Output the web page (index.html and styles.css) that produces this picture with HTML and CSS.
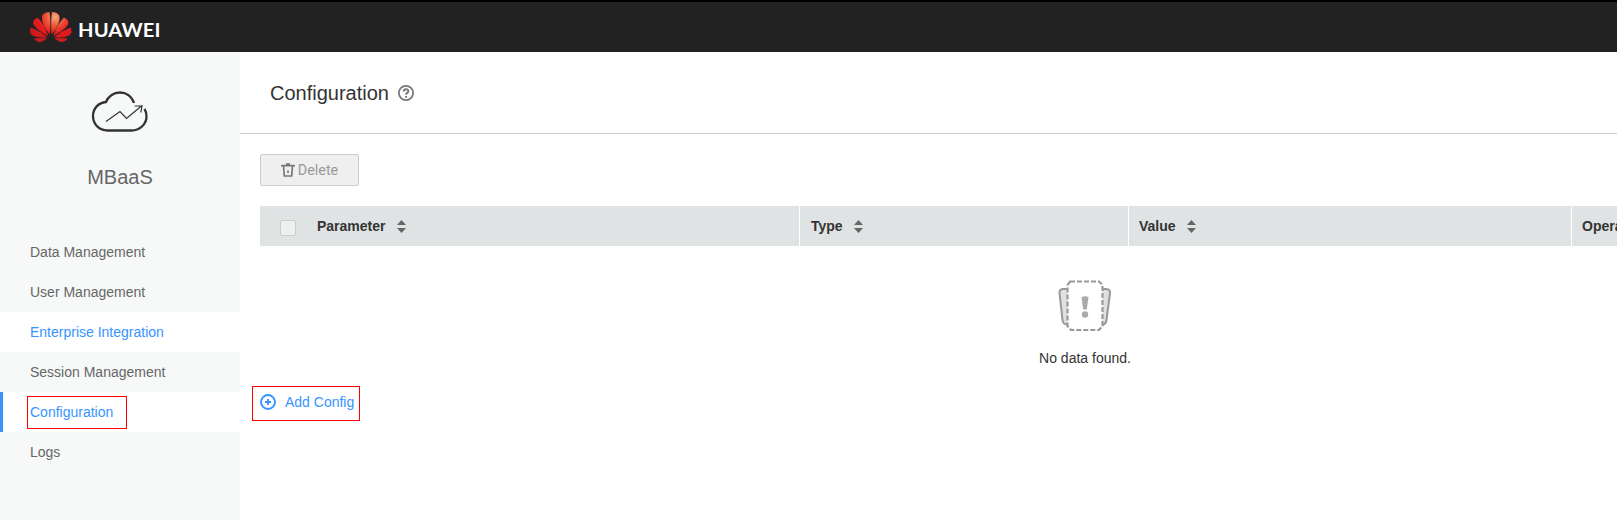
FILE: index.html
```html
<!DOCTYPE html>
<html lang="en">
<head>
<meta charset="utf-8">
<title>Configuration</title>
<link rel="stylesheet" href="styles.css">
</head>
<body>
<header class="topbar">
  <svg class="logo" width="42" height="31" viewBox="0 0 42 31">
    <defs>
      <radialGradient id="petal" gradientUnits="userSpaceOnUse" cx="25" cy="5" r="28">
        <stop offset="0" stop-color="#f6a878"/><stop offset=".36" stop-color="#ec4a34"/><stop offset=".6" stop-color="#e61a1c"/><stop offset="1" stop-color="#c81a1c"/>
      </radialGradient>
    </defs>
    <g fill="url(#petal)">
      <path d="M20 22.500C14 16 10.500 8 12.500 3Q15 0 19.500 0Q21 8 20 22.500Z"/>
      <path d="M21.500 22.500C27.500 16 31 8 29 3Q26.500 0 22 0Q20.500 8 21.500 22.500Z"/>
      <path d="M18.500 24C12 21 3 15 3 10.500Q4 7 7.500 5.500Q14 12 18.500 24Z"/>
      <path d="M23 24C29.500 21 38.500 15 38.500 10.500Q37.500 7 34 5.500Q27.500 12 23 24Z"/>
      <path d="M17.500 25.200C9 26 1 25 0 20Q0 17 1 15.500Q10 19 17.500 25.200Z"/>
      <path d="M24 25.200C32.500 26 40.500 25 41.500 20Q41.500 17 40.500 15.500Q31.500 19 24 25.200Z"/>
      <path d="M17 26.300H4Q6 30 9.500 30Q13 30 17 26.300Z"/>
      <path d="M24.500 26.300H37.500Q35.500 30 32 30Q28.500 30 24.500 26.300Z"/>
    </g>
  </svg>
  <span class="brand">HUAWEI</span>
</header>
<div class="layout">
  <aside class="sidebar">
    <div class="service">
      <svg width="58" height="44" viewBox="0 0 58 44" fill="none" stroke="#333">
        <path stroke-width="2.300" d="M43 13C40.500 5.500 34.500 2.500 29 2.500C22.500 2.500 17 6.500 15 12C7.500 12.500 2 18.500 2 26C2 34.500 8.500 40.500 16.500 40.500H40.500C48.500 40.500 55.500 34.500 55.500 26.500Q55.500 22 53.500 19"/>
        <path stroke-width="1.200" d="M15 31.500L29 21.500L35.500 28.500L51 15.500M43.500 16H51L49.800 22.500"/>
      </svg>
      <div class="service-name">MBaaS</div>
    </div>
    <nav class="menu">
      <a class="item">Data Management</a>
      <a class="item">User Management</a>
      <a class="item open">Enterprise Integration</a>
      <a class="item">Session Management</a>
      <a class="item open current"><span class="mark">Configuration</span></a>
      <a class="item">Logs</a>
    </nav>
  </aside>
  <main class="main">
    <div class="page-head">
      <h1 class="title">Configuration</h1>
      <svg width="16" height="16" viewBox="0 0 16 16" fill="none" stroke="#777">
        <circle cx="8" cy="8" r="7.100" stroke-width="1.800"/>
        <path stroke-width="2" d="M5.700 6.500C5.700 3.400 10.400 3.500 10.400 6.200C10.400 7.800 8.100 7.800 8.100 9.800M8.100 10.900V12.700"/>
      </svg>
    </div>
    <div class="content">
      <button class="delete" disabled>
        <svg width="14" height="14" viewBox="0 0 14 14" fill="none" stroke="#777">
          <path stroke-width="1.700" d="M0 2.600H14M2.500 3L3.300 13H10.700L11.500 3M5 1H9M7 7.500V10"/>
        </svg>Delete</button>
      <div class="table-head">
        <div class="cell first"><span class="check"></span>Parameter<svg class="sort" width="9" height="13" viewBox="0 0 9 13"><path d="M0 5L4.500 0L9 5ZM0 8H9L4.500 13Z"/></svg></div>
        <div class="cell">Type<svg class="sort" width="9" height="13" viewBox="0 0 9 13"><path d="M0 5L4.500 0L9 5ZM0 8H9L4.500 13Z"/></svg></div>
        <div class="cell near">Value<svg class="sort" width="9" height="13" viewBox="0 0 9 13"><path d="M0 5L4.500 0L9 5ZM0 8H9L4.500 13Z"/></svg></div>
        <div class="cell near">Operation</div>
      </div>
      <div class="empty">
        <svg width="54" height="52" viewBox="0 0 54 52" fill="none" stroke="#999">
          <path fill="#e0e0e0" stroke-width="2" d="M10 9H5Q1 9.500 1.500 13L4.500 40Q5 44.500 9 44.500H11M43 9H48Q52.500 9.500 52 13L48.500 40Q48 44.500 44 44.500H42"/>
          <path fill="#fff" stroke-width="2.200" stroke-dasharray="5 2" d="M12 1.500H41L44.500 5V46L41 50H13L9.500 46V5Z"/>
          <path fill="#aaa" stroke="none" d="M23.500 17Q27 15.500 30.500 17L28.800 29.500H25.200Z"/>
          <circle cx="27" cy="34.500" r="3.200" fill="#aaa" stroke="none"/>
        </svg>
        <div>No data found.</div>
      </div>
      <a class="add">
        <svg class="plus" width="16" height="16" viewBox="0 0 16 16" fill="none" stroke="#3794ff" stroke-width="1.900"><circle cx="8" cy="8" r="7"/><path d="M8 5V11M5 8H11"/></svg>
        Add Config
      </a>
    </div>
  </main>
</div>
</body>
</html>
```

FILE: styles.css
```css
* { box-sizing: border-box; }
body { margin: 0; height: 520px; overflow: hidden; background: #fff; color: #333; font: 14px/20px "Liberation Sans", Arial, sans-serif; }
svg { display: block; flex: none; }
.topbar { height: 52px; border-top: 2px solid #000; background: #222; display: flex; align-items: flex-start; padding: 10px 30px; gap: 6px; }
.brand { color: #fff; font: bold 18.500px/20px Lato, sans-serif; letter-spacing: .1px; padding-top: 8px; transform: scaleX(1.09); transform-origin: left; }
.layout { display: flex; height: 468px; }
.sidebar { flex: none; width: 240px; background: #f7f9f9; }
.service { height: 180px; padding-top: 38px; display: flex; flex-direction: column; align-items: center; color: #666; }
.service-name { font-size: 20px; line-height: 24px; margin-top: 31px; }
.menu { display: flex; flex-direction: column; }
.item { height: 40px; line-height: 40px; padding-left: 30px; color: #666; }
.open { background: #fff; color: #3794ff; }
.current { display: flex; align-items: center; padding-left: 24px; border-left: 3px solid #3794ff; }
.mark { width: 100px; height: 33px; border: 1px solid #f00; line-height: 31px; padding-left: 2px; }
.main { flex: 1; min-width: 0; overflow: hidden; }
.page-head { height: 82px; border-bottom: 1px solid #ccc; display: flex; align-items: center; gap: 9px; padding-left: 30px; }
.title { margin: 0; font-size: 20px; font-weight: normal; line-height: 24px; }
.content { padding: 20px 0 0 20px; }
.delete { display: flex; align-items: center; justify-content: center; gap: 3px; width: 99px; height: 32px; border: 1px solid #ccc; border-radius: 2px; background: #efefef; color: #999; font: 14.300px Roboto, sans-serif; padding: 0; }
.table-head { display: grid; grid-template-columns: 539px 328px 442px 120px; gap: 1px; height: 40px; margin-top: 20px; font-weight: bold; }
.cell { background: #dfe3e3; display: flex; align-items: center; padding-left: 11px; }
.near { padding-left: 10px; }
.first { padding-left: 20px; }
.check { width: 16px; height: 16px; border: 1px solid #ccc; border-radius: 2px; background: #efefef; margin: 4px 21px 0 0; }
.sort { margin-left: 11px; fill: #666; }
.empty { width: 1650px; padding-top: 34px; display: flex; flex-direction: column; align-items: center; gap: 16px; }
.add { display: flex; align-items: flex-start; gap: 9px; width: 108px; height: 35px; margin: 18px 0 0 -8px; padding: 5px 0 0 7px; border: 1px solid #f00; color: #3794ff; }
.plus { margin-top: 2px; }
```
